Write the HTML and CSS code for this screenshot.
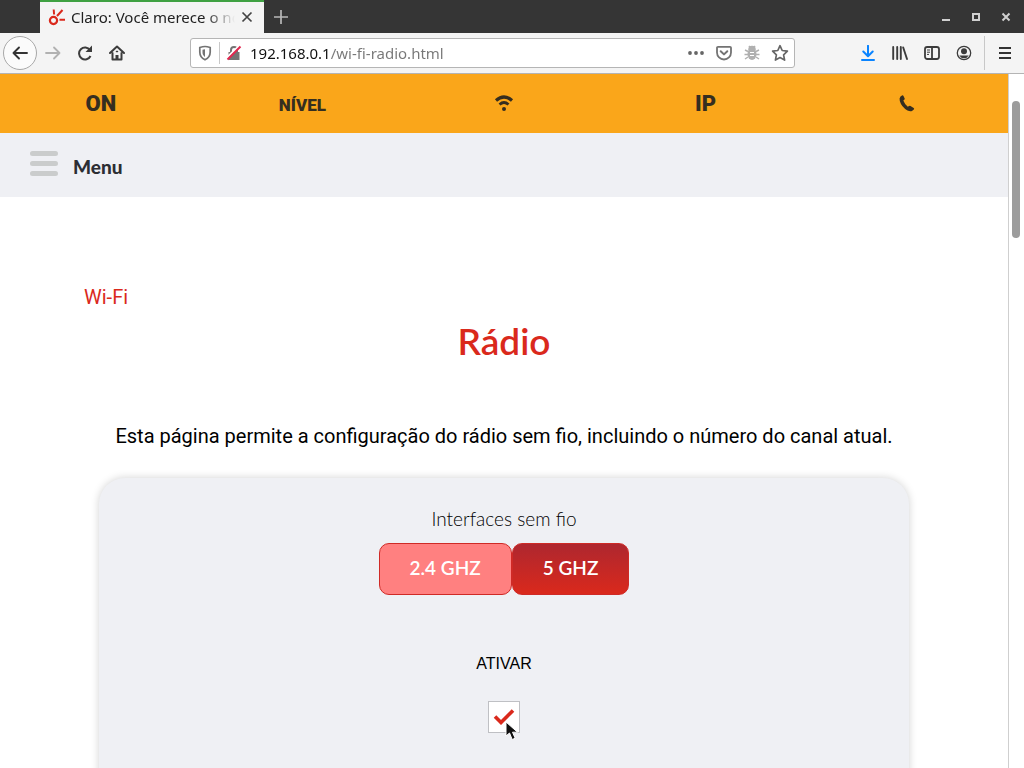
FILE: index.html
```html
<!DOCTYPE html>
<html lang="pt-BR">
<head>
<meta charset="utf-8">
<meta name="viewport" content="width=device-width, initial-scale=1">
<title>Claro: Você merece o novo</title>
<link rel="stylesheet" href="styles.css">
</head>
<body>
<div class="tabbar">
  <div class="tab">
    <svg class="logo" width="18" height="18" viewBox="0 0 18 18" fill="none" stroke="#da291c"><circle cx="5.500" cy="12.500" r="3.600" stroke-width="2.200"/><path d="M5.700 1.500l.4 5M9 8l5.500-6M11.500 11.700h5.500" stroke-width="2"/></svg>
    <span class="tab-title">Claro: Você merece o no</span>
    <button class="tab-close" aria-label="Fechar aba"><svg width="12" height="12" viewBox="0 0 12 12"><path d="M1.500 1.500l9 9M10.500 1.500l-9 9" stroke="#444" stroke-width="1.700"/></svg></button>
  </div>
  <button class="new-tab" aria-label="Nova aba"><svg width="14" height="14" viewBox="0 0 14 14"><path d="M7 0v14M0 7h14" stroke="#b8b8b8" stroke-width="1.700"/></svg></button>
  <div class="window-buttons">
    <button aria-label="Minimizar"><svg width="10" height="10" viewBox="0 0 10 10"><path d="M1 8h8" stroke="#d0d0d0" stroke-width="2"/></svg></button>
    <button aria-label="Maximizar"><svg width="10" height="10" viewBox="0 0 10 10"><path d="M2 2h6v6h-6z" fill="none" stroke="#d0d0d0" stroke-width="2"/></svg></button>
    <button aria-label="Fechar"><svg width="10" height="10" viewBox="0 0 10 10"><path d="M1.500 1.500l7 7M8.500 1.500l-7 7" stroke="#d0d0d0" stroke-width="2"/></svg></button>
  </div>
</div>
<div class="toolbar">
  <div class="nav">
    <button class="back" aria-label="Voltar"><svg width="16" height="16" viewBox="0 0 16 16" fill="none" stroke="#333" stroke-width="1.900" stroke-linecap="round" stroke-linejoin="round"><path d="M15 8H1.500M7 2.500L1.500 8 7 13.500"/></svg></button>
    <button aria-label="Avançar"><svg width="16" height="16" viewBox="0 0 16 16" fill="none" stroke="#b1b1b1" stroke-width="1.800" stroke-linecap="round" stroke-linejoin="round"><path d="M1 8h13.500M9 2.500L14.500 8 9 13.500"/></svg></button>
    <button aria-label="Recarregar"><svg width="16" height="16" viewBox="0 0 16 16" fill="none" stroke="#3c3c3c" stroke-width="2"><path d="M13 5A6 6 0 1 0 13.500 11"/><path d="M15 .5v6.500H8.500z" fill="#3c3c3c" stroke="none"/></svg></button>
    <button aria-label="Início"><svg width="16" height="16" viewBox="0 0 16 16" fill="none" stroke="#3c3c3c" stroke-width="2" stroke-linejoin="round" stroke-linecap="round"><path d="M1 8l7-6.500L15 8M3.500 8v6.500h9V8"/><path d="M8 14v-4" stroke-width="3" stroke-linecap="butt"/><path d="M7.500 6.500h1" stroke-width="1.500"/></svg></button>
  </div>
  <div class="address">
    <svg width="16" height="16" viewBox="0 0 16 16" fill="none" stroke="#737373" stroke-width="1.700"><path d="M8 1.500c-2 0-3.700.5-5.200 1V7c0 3.700 2 6.300 5.200 7.700 3.200-1.400 5.200-4 5.200-7.700V2.500c-1.500-.5-3.200-1-5.200-1z"/><path d="M8 4.300c-1 0-1.700.2-2.500.4V7.500c0 2 1 3.500 2.500 4.400z" fill="#737373" stroke="none"/></svg>
    <span class="divider"></span>
    <svg width="16" height="16" viewBox="0 0 16 16" fill="none"><path d="M5 8V5a3 3 0 0 1 6 0v3" stroke="#737373" stroke-width="2"/><path d="M2.500 7h11v8h-11z" fill="#737373"/><path d="M.5 13L13 1" stroke="#fff" stroke-width="2"/><path d="M1.500 14.500L14.500 1.500" stroke="#e22850" stroke-width="2"/></svg>
    <input class="url" type="text" aria-label="Endereço" value="192.168.0.1/wi-fi-radio.html">
    <div class="page-actions">
      <button aria-label="Ações da página"><svg width="16" height="16" viewBox="0 0 16 16" fill="#666"><circle cx="2" cy="8" r="1.900"/><circle cx="8" cy="8" r="1.900"/><circle cx="14" cy="8" r="1.900"/></svg></button>
      <button aria-label="Pocket"><svg width="16" height="16" viewBox="0 0 16 16" fill="none" stroke="#737373" stroke-width="1.800" stroke-linejoin="round" stroke-linecap="round"><path d="M2 1.800h12a1 1 0 0 1 1 1V7.500a7 7 0 0 1-14 0V2.800a1 1 0 0 1 1-1z"/><path d="M4.700 6.200L8 9.400l3.300-3.200" stroke-width="2"/></svg></button>
      <button aria-label="Depurar"><svg width="16" height="16" viewBox="0 0 16 16" fill="none" stroke="#b0b0b0" stroke-width="1.500"><ellipse cx="8" cy="9" rx="4.500" ry="6" fill="#b0b0b0" stroke="none"/><path d="M5 4.500a3 3 0 0 1 6 0zM5 1l1.500 2M11 1L9.500 3M1 5l3 1.500M15 5l-3 1.500M.5 9.500h15M1 14l3-2M15 14l-3-2" fill="#b0b0b0"/><path d="M6 7.500h4M6 10.500h4" stroke="#fff" stroke-width="1"/></svg></button>
      <button aria-label="Favoritar"><svg width="18" height="18" viewBox="0 0 18 18" fill="none" stroke="#666" stroke-width="1.700" stroke-linejoin="round"><path d="M9 1.700l2.200 4.800 5.200.7-3.800 3.600 1 5.300L9 13.500l-4.600 2.600 1-5.300L1.600 7.200l5.200-.7z"/></svg></button>
    </div>
  </div>
  <div class="tools">
    <button aria-label="Downloads"><svg width="16" height="16" viewBox="0 0 16 16" fill="none" stroke="#0a84ff" stroke-width="2" stroke-linecap="round" stroke-linejoin="round"><path d="M8 .8v10M3.300 6.500L8 11.200l4.700-4.700M2 15h12"/></svg></button>
    <button aria-label="Biblioteca"><svg width="16" height="16" viewBox="0 0 16 16" fill="none" stroke="#3c3c3c" stroke-width="1.900" stroke-linecap="round"><path d="M1.200 2v12M5.200 2v12M8.800 2v12M11.200 2.500L15 14"/></svg></button>
    <button aria-label="Painel lateral"><svg width="16" height="16" viewBox="0 0 16 16" fill="none" stroke="#3c3c3c" stroke-width="1.800"><rect x="1" y="2" width="14" height="12" rx="2.200"/><path d="M8 2v12"/><path d="M3 5h3M3 7.200h3M3 9.400h2" stroke-width="1"/></svg></button>
    <button aria-label="Conta"><svg width="16" height="16" viewBox="0 0 16 16" fill="#3c3c3c"><circle cx="8" cy="8" r="6.700" fill="none" stroke="#3c3c3c" stroke-width="1.300"/><circle cx="8" cy="6.200" r="3"/><path d="M3.300 10.500h9.400a5.400 5.400 0 0 1-9.400 0z"/></svg></button>
    <span class="divider tall"></span>
    <button aria-label="Abrir menu"><svg width="14" height="14" viewBox="0 0 14 14"><path d="M1 2h12M1 7h12M1 12h12" stroke="#333" stroke-width="2"/></svg></button>
  </div>
</div>
<div class="viewport">
  <div class="page">
    <header class="status">
      <span>ON</span>
      <span class="level">NÍVEL</span>
      <span><svg width="20" height="20" viewBox="0 0 20 20" fill="none" stroke="#352e20"><path d="M2 6.500Q10-.5 18 6.500" stroke-width="3.200"/><path d="M5.500 10.500q4.500-4 9 0" stroke-width="2.800"/><circle cx="10" cy="15" r="2" fill="#352e20" stroke="none"/></svg></span>
      <span>IP</span>
      <span><svg width="16" height="18" viewBox="0 0 16 18"><path d="M1.500 1.500L3 .4Q4 0 4.500.9L5.700 3.400Q6 4.300 5 4.900L4.300 5.600Q5.500 9.100 8.800 11.800L10 11.100Q10.700 10.400 11.500 11L14.700 13.100Q15.600 13.800 14.800 14.600L13.300 15.800Q11.500 17 8.500 15.600 2.500 12.100.8 6.100 0 3.100 1.500 1.500z" fill="#352e20"/></svg></span>
    </header>
    <nav class="menubar"><button class="menu"><svg width="28" height="26" viewBox="0 0 28 26"><path d="M2.500 3.500h23M2.500 13.500h23M2.500 23.500h23" stroke="#cacccc" stroke-width="5" stroke-linecap="round"/></svg><span>Menu</span></button></nav>
    <main class="content">
      <a class="crumb" href="#">Wi-Fi</a>
      <h1>Rádio</h1>
      <p class="intro">Esta página permite a configuração do rádio sem fio, incluindo o número do canal atual.</p>
      <section class="panel">
        <h2>Interfaces sem fio</h2>
        <div class="bands"><button class="band selected">2.4 GHZ</button><button class="band">5 GHZ</button></div>
        <label class="enable" for="enable">ATIVAR</label>
        <div class="check-wrap">
          <input class="check" id="enable" type="checkbox" checked>
          <svg class="tick" width="22" height="18" viewBox="0 0 22 18"><path d="M2 8.500l6 6L20 2.500" fill="none" stroke="#da291c" stroke-width="3.600"/></svg>
          <svg class="pointer" width="14" height="20" viewBox="0 0 14 20"><path d="M1 1v14l3.500-3 2.700 6.500 3-1.300-2.700-6H12.500z" fill="#111" stroke="#fff" stroke-width="1"/></svg>
        </div>
      </section>
    </main>
  </div>
  <div class="scrollbar"><div class="thumb"></div></div>
</div>
</body>
</html>
```

FILE: styles.css
```css
* { box-sizing: border-box; }
body { margin: 0; height: 100vh; display: flex; flex-direction: column; overflow: hidden; background: #fff; font-family: Roboto, sans-serif; color: #000; }
button { display: flex; align-items: center; justify-content: center; margin: 0; padding: 0; border: 0; background: none; font: inherit; color: inherit; }
svg { display: block; flex: none; }

.tabbar { flex: none; display: flex; height: 33px; padding-left: 40px; background: #353535; }
.tab { display: flex; align-items: center; width: 224px; padding: 0 10px 2px 8px; gap: 5px; border-top: 2px solid #3fa142; background: #f4f4f4; color: #222; font: 15px/20px "Noto Sans", sans-serif; }
.tab-title { flex: 1; min-width: 0; white-space: nowrap; mask-image: linear-gradient(90deg, #000 82%, transparent); }
.tab-close { flex: none; width: 14px; height: 20px; }
.new-tab { width: 34px; }
.window-buttons { display: flex; gap: 20px; margin-left: auto; padding-right: 13px; }

.toolbar { flex: none; display: flex; align-items: center; height: 41px; padding: 0 11px 0 3px; background: #f4f4f4; border-bottom: 1px solid #b4b4b4; }
.nav { display: flex; align-items: center; width: 187px; }
.nav button { width: 32px; height: 34px; }
.nav .back { width: 34px; border: 1px solid #a8a8a8; border-radius: 50%; background: #fbfbfb; }
.address { flex: 1; display: flex; align-items: center; height: 30px; gap: 6px; padding: 0 6px; border: 1px solid #b5b5b5; border-radius: 3px; background: #fff; }
.divider { width: 1px; height: 22px; background: #c8c8c8; }
.tall { height: 34px; }
.url { flex: 1; min-width: 0; padding: 0 0 0 2px; border: 0; outline: 0; font: 15px/24px "Noto Sans", sans-serif; color: transparent; background: linear-gradient(90deg, #111 82px, #777 82px); background-clip: text; -webkit-background-clip: text; }
.page-actions { display: flex; gap: 12px; }
.page-actions button { width: 16px; height: 24px; }
.tools { display: flex; align-items: center; justify-content: flex-end; gap: 16px; width: 218px; }
.tools button { width: 16px; height: 24px; }
.tools .divider { margin: 0 -4px; }

.viewport { flex: 1; display: flex; min-height: 0; }
.page { flex: 1; min-width: 0; overflow: hidden; }
.scrollbar { width: 16px; padding: 27px 4px 0 3px; border-left: 1px solid #cfcfcf; background: #fff; }
.thumb { width: 8px; height: 137px; border-radius: 4px; background: #9c9c9c; }

.status { display: grid; grid-template-columns: repeat(5, 1fr); align-items: center; justify-items: center; height: 59px; background: #faa61a; color: #352e20; font: 900 22px/24px Roboto, sans-serif; }
.level { padding-top: 3px; font-size: 17px; }
.menubar { height: 64px; padding: 13px 30px; background: #eff0f4; }
.menu { gap: 15px; color: #2c2e33; font: 900 19px/24px Lato, sans-serif; }
.menu span { padding-top: 9px; }

.content { padding: 88px 84px 0; }
.crumb { display: block; width: fit-content; color: #da291c; font-size: 20px; line-height: 24px; text-decoration: none; }
h1 { margin: 10px 0 0; color: #da291c; font: 600 37px/44px Lato, sans-serif; text-align: center; }
.intro { margin: 61px 0 0; font-size: 20px; line-height: 24px; text-align: center; }
.panel { display: flex; flex-direction: column; align-items: center; height: 400px; margin: 30px 15px 0; padding-top: 29px; border-radius: 26px; background: #eff0f4; box-shadow: 0 0 8px rgba(0, 0, 0, .18); }
h2 { margin: 0; color: #000; font: 300 19px/24px Lato, sans-serif; }
.bands { display: flex; margin-top: 12px; }
.band { height: 52px; padding: 0 30px 3px; border: 1px solid #cf2a26; border-radius: 10px; color: #fff; background: linear-gradient(#ae272f, #da291c); font: 600 19px/24px Lato, sans-serif; }
.selected { background: #ff8080; }
.enable { margin-top: 57px; font: 16px/24px "Liberation Sans", Arial, sans-serif; }
.check-wrap { position: relative; margin-top: 25px; }
.check { display: block; appearance: none; width: 32px; height: 32px; margin: 0; border: 1px solid #bfc0c4; background: #fff; }
.tick { position: absolute; left: 5px; top: 7px; pointer-events: none; }
.pointer { position: absolute; left: 17px; top: 20px; pointer-events: none; }
```
